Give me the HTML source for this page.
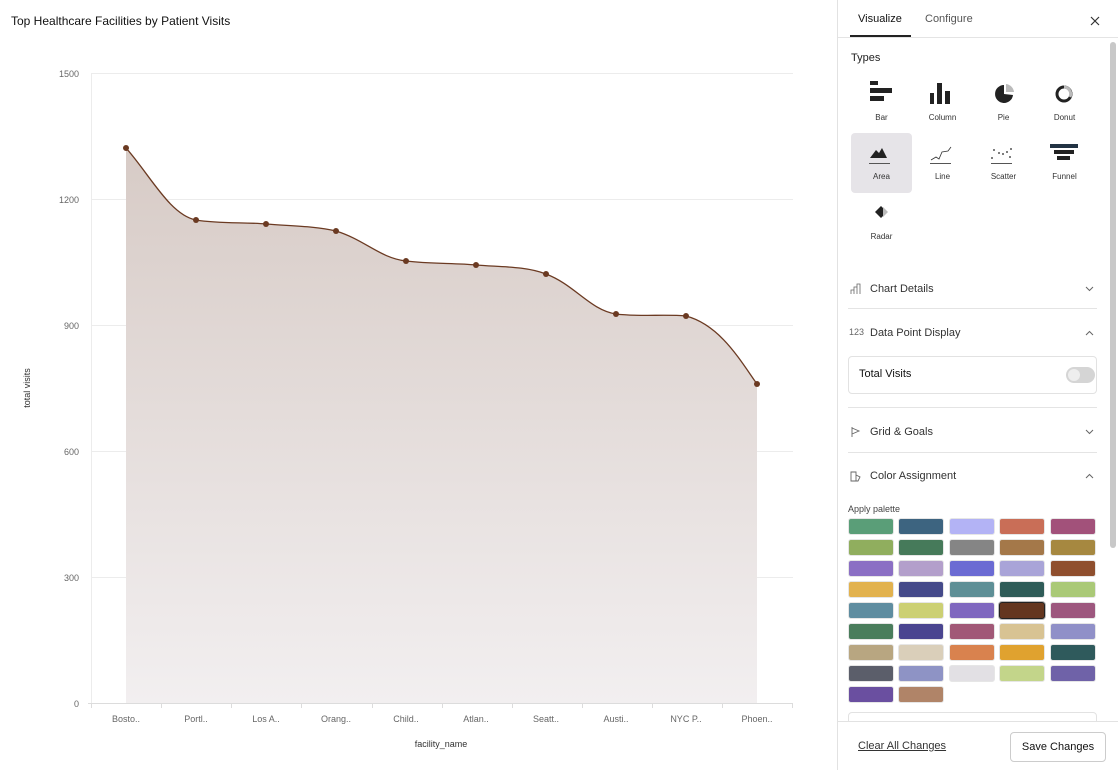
<!DOCTYPE html>
<html><head><meta charset="utf-8"><style>
*{box-sizing:border-box;margin:0;padding:0}
body{width:1118px;height:770px;background:#fff;font-family:"Liberation Sans",sans-serif;color:#222;position:relative;overflow:hidden}
.t{position:absolute;white-space:nowrap}
.side{position:absolute;left:837px;top:0;width:281px;height:770px;border-left:1px solid #e2e2e2;background:#fff}
.hr{position:absolute;left:10px;width:249px;height:1px;background:#e4e4e4}
.sw{position:absolute;width:46px;height:17px;border-radius:3px;border:1px solid #e6e6e6}
.ty{position:absolute;width:61px;text-align:center;font-size:8px;color:#333}
</style></head><body>
<div class="t" style="left:11px;top:14px;font-size:12px;color:#111">Top Healthcare Facilities by Patient Visits</div>
<svg width="837" height="770" style="position:absolute;left:0;top:0">
<defs><linearGradient id="g" x1="0" y1="0" x2="0" y2="1"><stop offset="0" stop-color="#d7cbc6"/><stop offset="1" stop-color="#f2eff0"/></linearGradient></defs>
<g stroke="#ececec" stroke-width="1">
<line x1="91" y1="73.5" x2="793" y2="73.5"/><line x1="91" y1="199.5" x2="793" y2="199.5"/><line x1="91" y1="325.5" x2="793" y2="325.5"/><line x1="91" y1="451.5" x2="793" y2="451.5"/><line x1="91" y1="577.5" x2="793" y2="577.5"/>
<line x1="91.5" y1="73" x2="91.5" y2="703"/>
</g>
<path d="M126,148 C150,175 170,215 196,220 C220,224 245,222 266,224 C290,226 315,226 336,231 C365,240 380,258 406,261 C430,264 455,263 476,265 C500,267 525,266 546,274 C575,285 590,310 616,314 C640,317 665,314 686,316 C720,325 740,360 757,384 L757,703 L126,703 Z" fill="url(#g)"/>
<path d="M126,148 C150,175 170,215 196,220 C220,224 245,222 266,224 C290,226 315,226 336,231 C365,240 380,258 406,261 C430,264 455,263 476,265 C500,267 525,266 546,274 C575,285 590,310 616,314 C640,317 665,314 686,316 C720,325 740,360 757,384" fill="none" stroke="#6b3a22" stroke-width="1.3"/>
<g fill="#6b3a22"><circle cx="126" cy="148" r="3"/><circle cx="196" cy="220" r="3"/><circle cx="266" cy="224" r="3"/><circle cx="336" cy="231" r="3"/><circle cx="406" cy="261" r="3"/><circle cx="476" cy="265" r="3"/><circle cx="546" cy="274" r="3"/><circle cx="616" cy="314" r="3"/><circle cx="686" cy="316" r="3"/><circle cx="757" cy="384" r="3"/></g>
<g stroke="#dcdcdc"><line x1="88" y1="703.5" x2="793" y2="703.5"/>
<line x1="91.5" y1="703" x2="91.5" y2="708"/><line x1="161.5" y1="703" x2="161.5" y2="708"/><line x1="231.5" y1="703" x2="231.5" y2="708"/><line x1="301.5" y1="703" x2="301.5" y2="708"/><line x1="372.5" y1="703" x2="372.5" y2="708"/><line x1="442.5" y1="703" x2="442.5" y2="708"/><line x1="512.5" y1="703" x2="512.5" y2="708"/><line x1="582.5" y1="703" x2="582.5" y2="708"/><line x1="652.5" y1="703" x2="652.5" y2="708"/><line x1="722.5" y1="703" x2="722.5" y2="708"/><line x1="792.5" y1="703" x2="792.5" y2="708"/></g>
<g font-size="9" fill="#666" font-family="Liberation Sans" text-anchor="end">
<text x="79" y="77">1500</text><text x="79" y="203">1200</text><text x="79" y="329">900</text><text x="79" y="455">600</text><text x="79" y="581">300</text><text x="79" y="707">0</text></g>
<g font-size="9" fill="#666" font-family="Liberation Sans" text-anchor="middle">
<text x="126" y="722">Bosto..</text><text x="196" y="722">Portl..</text><text x="266" y="722">Los A..</text><text x="336" y="722">Orang..</text><text x="406" y="722">Child..</text><text x="476" y="722">Atlan..</text><text x="546" y="722">Seatt..</text><text x="616" y="722">Austi..</text><text x="686" y="722">NYC P..</text><text x="757" y="722">Phoen..</text>
<text x="441" y="747" fill="#333">facility_name</text>
<text transform="translate(30,388) rotate(-90)" fill="#333">total visits</text></g>
</svg>

<div class="side">
<div class="t" style="left:20px;top:13px;font-size:11px;color:#111">Visualize</div>
<div class="t" style="left:87px;top:13px;font-size:11px;color:#555">Configure</div>
<div style="position:absolute;left:12px;top:35px;width:61px;height:2px;background:#222"></div>
<div class="hr" style="left:0;width:281px;top:37px"></div>
<svg style="position:absolute;left:252px;top:16px" width="10" height="10"><path d="M1,1 L9,9 M9,1 L1,9" stroke="#333" stroke-width="1.2"/></svg>
<div style="position:absolute;left:272px;top:42px;width:6px;height:506px;background:#c8c8c8;border-radius:3px"></div>
<div class="t" style="left:13px;top:52px;font-size:11px">Types</div>
<div style="position:absolute;left:13px;top:133px;width:61px;height:60px;background:#e6e4e8;border-radius:4px"></div>
<svg style="position:absolute;left:0;top:0" width="270" height="230">
<g fill="#222">
<rect x="32" y="81" width="8" height="4"/><rect x="32" y="88" width="22" height="5"/><rect x="32" y="96" width="14" height="5"/>
<rect x="92" y="93" width="4" height="11"/><rect x="99" y="83" width="5" height="21"/><rect x="107" y="91" width="5" height="13"/>
<path d="M166,85 A9,9 0 1 0 175,95 L166,94 Z"/><path d="M168,84 A9,9 0 0 1 176,92 L168,92 Z" fill="#bbb"/>
<circle cx="226" cy="94" r="7" fill="none" stroke="#222" stroke-width="3"/><path d="M226,87 A7,7 0 0 1 232,97" fill="none" stroke="#bbb" stroke-width="3"/>
<path d="M32,158 L38,150 L41,153 L44,148 L49,158 Z"/><rect x="31" y="163" width="21" height="1" fill="#555"/>
<path d="M93,160 L98,157 L101,159 L104,152 L110,151 L113,147" fill="none" stroke="#333" stroke-width="0.8"/><rect x="92" y="163" width="21" height="1" fill="#555"/>
<circle cx="156" cy="150" r=".9"/><circle cx="161" cy="153" r=".9"/><circle cx="165" cy="154" r=".9"/><circle cx="169" cy="152" r=".9"/><circle cx="173" cy="149" r=".9"/><circle cx="154" cy="158" r=".9"/><circle cx="172" cy="157" r=".9"/><rect x="153" y="163" width="21" height="1" fill="#555"/>
<rect x="212" y="144" width="28" height="4" fill="#234"/><rect x="216" y="150" width="20" height="4"/><rect x="219" y="156" width="13" height="4"/>
<path d="M43,206 L49,212 L43,218 L37,212 Z"/><path d="M45,207 L50,212 L45,217" fill="#bbb"/>
</g></svg>
<div class="ty" style="left:13px;top:113px">Bar</div><div class="ty" style="left:74px;top:113px">Column</div><div class="ty" style="left:135px;top:113px">Pie</div><div class="ty" style="left:196px;top:113px">Donut</div>
<div class="ty" style="left:13px;top:172px">Area</div><div class="ty" style="left:74px;top:172px">Line</div><div class="ty" style="left:135px;top:172px">Scatter</div><div class="ty" style="left:196px;top:172px">Funnel</div>
<div class="ty" style="left:13px;top:232px">Radar</div>

<div class="t" style="left:32px;top:283px;font-size:11px;color:#333">Chart Details</div>
<div class="t" style="left:32px;top:327px;font-size:11px;color:#333">Data Point Display</div>
<div class="t" style="left:32px;top:426px;font-size:11px;color:#333">Grid &amp; Goals</div>
<div class="t" style="left:32px;top:470px;font-size:11px;color:#333">Color Assignment</div>
<svg style="position:absolute;left:12px;top:283px" width="12" height="12"><path d="M1,11 V7 H4 V11 M4,11 V4 H7 V11 M7,11 V1 H10 V11" fill="none" stroke="#666" stroke-width="0.8"/></svg>
<div class="t" style="left:11px;top:327px;font-size:9px;color:#666">123</div>
<svg style="position:absolute;left:12px;top:426px" width="12" height="12"><path d="M2,1 V11 M2,2 L9,5 L2,8" fill="none" stroke="#666" stroke-width="0.9"/></svg>
<svg style="position:absolute;left:12px;top:470px" width="12" height="12"><path d="M1,2 H6 V11 H1 Z M6,5 L10,7 L8,11 H6" fill="none" stroke="#666" stroke-width="0.9"/></svg>
<svg style="position:absolute;left:247px;top:286px" width="10" height="6"><path d="M1,1 L4.5,4.5 L8,1" fill="none" stroke="#666"/></svg>
<svg style="position:absolute;left:247px;top:330px" width="10" height="6"><path d="M1,5 L4.5,1.5 L8,5" fill="none" stroke="#666"/></svg>
<svg style="position:absolute;left:247px;top:429px" width="10" height="6"><path d="M1,1 L4.5,4.5 L8,1" fill="none" stroke="#666"/></svg>
<svg style="position:absolute;left:247px;top:473px" width="10" height="6"><path d="M1,5 L4.5,1.5 L8,5" fill="none" stroke="#666"/></svg>
<div class="hr" style="top:308px"></div>
<div style="position:absolute;left:10px;top:356px;width:249px;height:38px;border:1px solid #e2e2e2;border-radius:4px"></div>
<div class="t" style="left:21px;top:368px;font-size:11px;color:#111">Total Visits</div>
<div style="position:absolute;left:228px;top:367px;width:29px;height:16px;background:#d5d5d5;border-radius:8px"><div style="position:absolute;left:2px;top:2px;width:12px;height:12px;border-radius:6px;background:#eee"></div></div>
<div class="hr" style="top:407px"></div>
<div class="hr" style="top:452px"></div>
<div class="t" style="left:10px;top:504px;font-size:9px;color:#444">Apply palette</div>
<div style="position:absolute;left:10px;top:712px;width:249px;height:20px;border:1px solid #e2e2e2;border-radius:4px"></div>
<div style="position:absolute;left:0;top:721px;width:281px;height:49px;background:#fff;border-top:1px solid #e2e2e2"></div>
<div class="t" style="left:20px;top:740px;font-size:11px;color:#333;text-decoration:underline">Clear All Changes</div>
<div style="position:absolute;left:172px;top:732px;width:96px;height:30px;border:1px solid #ccc;border-radius:4px;font-size:11px;color:#111;text-align:center;line-height:28px">Save Changes</div>
</div>

<div id="sw"></div>
<script>
var c=[["#5a9e78","#3d6480","#b3b3f5","#c96e57","#a2517a"],["#90ae5e","#467a5a","#858585","#a47849","#a68840"],["#8b6fc4","#b39fcb","#6b6bd3","#a9a4d8","#8f4f2e"],["#e2b24e","#454a8a","#5e8f96","#2f5c58","#aac977"],["#5f8da0","#ccd073","#7f67bf","#64361f","#9d577e"],["#4a7d5c","#4a4590","#a15877","#d8c393","#9090c8"],["#b8a681","#dacfba","#d9824e","#e0a22f","#2f5a5c"],["#5b5e6a","#8e93c5","#e2e0e4","#c3d58a","#6f62a8"],["#6a4fa0","#b08468"]];
var h="";c.forEach(function(r,i){r.forEach(function(col,j){h+='<div class="sw" style="left:'+(848+j*50.4)+'px;top:'+(518+i*21)+'px;background:'+col+(i==4&&j==3?';border:1px solid #222;box-shadow:0 0 0 1px #bbb':'')+'"></div>';});});
document.getElementById("sw").innerHTML=h;
</script>
</body></html>
